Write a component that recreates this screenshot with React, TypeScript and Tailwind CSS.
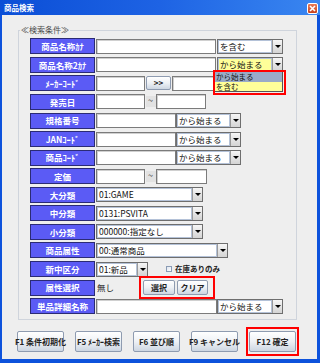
import React from "react";

const FONT = "[font-family:'Noto_Sans_CJK_JP','Noto_Sans',sans-serif]";

function Lbl({ t }: { t: string }) {
  return (
    <div className="w-[65px] h-[16px] shrink-0 bg-[#5b5bf5] border border-[#2b2b74] text-white font-bold text-[8.5px] leading-none flex items-center justify-center whitespace-nowrap">
      {t}
    </div>
  );
}

function Inp({ w, text }: { w: string; text?: string }) {
  return (
    <div
      className={`${w} h-[15px] shrink-0 bg-white border border-[#7b7b7b] shadow-[inset_1px_1px_0_#d0d0d0] text-[8.5px] leading-[13px] pl-[2px] text-[#111] whitespace-nowrap overflow-hidden`}
    >
      {text}
    </div>
  );
}

function Arrow() {
  return (
    <div className="w-[10px] h-full bg-gradient-to-b from-[#f6f6f6] to-[#d4d4d4] border-l border-[#9a9a9a] flex items-center justify-center">
      <div className="w-0 h-0 border-l-[3px] border-r-[3px] border-t-[3px] border-l-transparent border-r-transparent border-t-black" />
    </div>
  );
}

function Sel({
  w,
  text,
  yellow,
  children,
}: {
  w: string;
  text: string;
  yellow?: boolean;
  children?: React.ReactNode;
}) {
  return (
    <div className={`${w} h-[15px] shrink-0 flex border border-[#6e6e6e] relative`}>
      <div
        className={`flex-1 border border-[#b4c2d8] ${
          yellow ? "bg-[#ffff99]" : "bg-white"
        } text-[8.5px] leading-[11px] pl-[1px] text-[#111] whitespace-nowrap overflow-hidden`}
      >
        {text}
      </div>
      <Arrow />
      {children}
    </div>
  );
}

function Btn({ w, h, t }: { w: string; h: string; t: string }) {
  return (
    <div
      className={`${w} ${h} shrink-0 bg-gradient-to-b from-white via-[#eef1f5] to-[#cdd6e2] border border-[#8e9bb0] rounded-[2px] text-[8px] font-bold leading-none text-[#222] flex items-center justify-center whitespace-nowrap`}
    >
      {t}
    </div>
  );
}

function Tilde() {
  return (
    <div className="w-[11px] h-[15px] shrink-0 flex items-center justify-center">
      <div className="w-[10px] h-[11px] bg-[#e2e2e2] text-[9px] leading-[10px] text-center text-[#333]">~</div>
    </div>
  );
}

function Row({ label, children }: { label: string; children?: React.ReactNode }) {
  return (
    <div className="h-[18.57px] flex items-center">
      <Lbl t={label} />
      <div className="flex items-center ml-[1px] h-full">{children}</div>
    </div>
  );
}

export default function App() {
  return (
    <div className={`w-[320px] h-[363px] flex flex-col bg-[#0d52dc] pl-[2px] pr-[3px] pb-[4px] ${FONT}`}>
      {/* title bar */}
      <div className="h-[15px] -ml-[2px] -mr-[3px] bg-gradient-to-r from-[#0a4ed6] via-[#1e63e4] to-[#3a86f0] flex items-center justify-between pl-[4px] pr-[2px]">
        <span className="text-white font-bold text-[7.5px] leading-none">商品検索</span>
        <div className="w-[11px] h-[11px] mt-[1px] rounded-[2px] border border-white bg-gradient-to-b from-[#e87a55] to-[#c8401c] flex items-center justify-center">
          <svg width="7" height="7" viewBox="0 0 7 7">
            <path d="M1 1 L6 6 M6 1 L1 6" stroke="white" strokeWidth="1.6" />
          </svg>
        </div>
      </div>

      {/* body */}
      <div className="flex-1 bg-[#eeeeee] pl-[15px] pt-[15px]">
        <div className="relative ml-[1px] w-[279px] h-[290px] border border-[#cfd4dc]">
          <span className="absolute -top-[6px] left-[1px] bg-[#eeeeee] px-[1px] text-[8px] leading-[10px] text-[#4b4b4b]">
            ≪検索条件≫
          </span>
          <div className="pl-[11px] pt-[6px] flex flex-col">
            <Row label="商品名称ｶﾅ">
              <Inp w="w-[120px]" />
              <div className="ml-[1px]">
                <Sel w="w-[66px]" text="を含む" />
              </div>
            </Row>
            <Row label="商品名称2ｶﾅ">
              <Inp w="w-[120px]" />
              <div className="ml-[1px]">
                <Sel w="w-[66px]" text="から始まる" yellow>
                  {/* opened list */}
                  <div className="absolute left-[-5px] top-[calc(100%-1px)] w-[73px] h-[25px] border-2 border-[#ff0000] z-10">
                    <div className="w-[68px] h-[20px] border-r border-b border-[#555] flex flex-col">
                      <div className="h-[10px] overflow-hidden bg-[#9aabc8] text-[7.5px] leading-[10px] pl-[1px] text-[#111] whitespace-nowrap">
                        から始まる
                      </div>
                      <div className="h-[9px] overflow-hidden bg-[#ffff99] text-[7.5px] leading-[9px] pl-[1px] text-[#111]">
                        を含む
                      </div>
                    </div>
                  </div>
                </Sel>
              </div>
            </Row>
            <Row label="ﾒｰｶｰｺｰﾄﾞ">
              <Inp w="w-[49px]" />
              <div className="ml-[1px]">
                <Btn w="w-[25px]" h="h-[14px]" t=">>" />
              </div>
              <div className="ml-[1px]">
                <Inp w="w-[86px]" />
              </div>
            </Row>
            <Row label="発売日">
              <Inp w="w-[49px]" />
              <Tilde />
              <Inp w="w-[50px]" />
            </Row>
            <Row label="規格番号">
              <Inp w="w-[80px]" />
              <Sel w="w-[65px]" text="から始まる" />
            </Row>
            <Row label="JANｺｰﾄﾞ">
              <Inp w="w-[80px]" />
              <Sel w="w-[65px]" text="から始まる" />
            </Row>
            <Row label="商品ｺｰﾄﾞ">
              <Inp w="w-[80px]" />
              <Sel w="w-[65px]" text="から始まる" />
            </Row>
            <Row label="定価">
              <Inp w="w-[49px]" />
              <Tilde />
              <Inp w="w-[51px]" />
            </Row>
            <Row label="大分類">
              <Sel w="w-[107px]" text="01:GAME" />
            </Row>
            <Row label="中分類">
              <Sel w="w-[107px]" text="0131:PSVITA" />
            </Row>
            <Row label="小分類">
              <Sel w="w-[107px]" text="000000:指定なし" />
            </Row>
            <Row label="商品属性">
              <Sel w="w-[132px]" text="00:通常商品" />
            </Row>
            <Row label="新中区分">
              <Sel w="w-[52px]" text="01:新品" />
              <div className="ml-[18px] flex items-center gap-[3px]">
                <div className="w-[6px] h-[6px] border border-[#8a9bb4] bg-gradient-to-br from-[#dfe5ee] to-white" />
                <span className="text-[7.5px] font-bold leading-none text-[#222]">在庫ありのみ</span>
              </div>
            </Row>
            <Row label="属性選択">
              <div className="w-[44px] h-[15px] text-[8.5px] leading-[15px] pl-[1px] text-[#222]">無し</div>
              <div className="relative ml-[3px] flex gap-[2px]">
                <Btn w="w-[32px]" h="h-[15px]" t="選択" />
                <Btn w="w-[31px]" h="h-[15px]" t="クリア" />
                <div className="absolute -left-[4px] -top-[4px] w-[76px] h-[23px] border-2 border-[#ff0000]" />
              </div>
            </Row>
            <Row label="単品詳細名称">
              <Inp w="w-[121px]" />
              <Sel w="w-[66px]" text="から始まる" />
            </Row>
          </div>
        </div>

        {/* function keys */}
        <div className="mt-[11px] flex gap-[11px]">
          <Btn w="w-[47px]" h="h-[21px]" t="F1 条件初期化" />
          <Btn w="w-[47px]" h="h-[21px]" t="F5 ﾒｰｶｰ検索" />
          <Btn w="w-[47px]" h="h-[21px]" t="F6 並び順" />
          <Btn w="w-[47px]" h="h-[21px]" t="F9 キャンセル" />
          <div className="relative">
            <Btn w="w-[47px]" h="h-[21px]" t="F12 確定" />
            <div className="absolute -left-[3px] -top-[4px] w-[53px] h-[29px] border-2 border-[#ff0000]" />
          </div>
        </div>
      </div>
    </div>
  );
}
